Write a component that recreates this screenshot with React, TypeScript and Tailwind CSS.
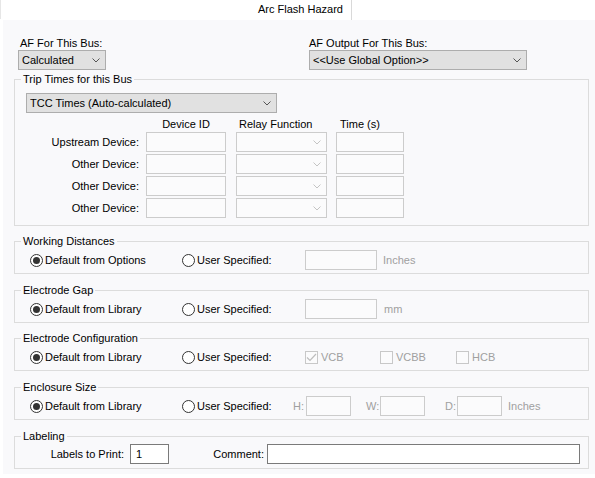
import type { ReactNode } from "react";

function Chevron({ color = "#444" }: { color?: string }) {
  return (
    <svg width="8" height="5" viewBox="0 0 8 5" className="shrink-0">
      <polyline points="0.5,0.5 4,4 7.5,0.5" fill="none" stroke={color} strokeWidth="1" />
    </svg>
  );
}

function Combo({ text, w, disabled }: { text?: string; w: string; disabled?: boolean }) {
  return (
    <div
      className={`flex items-center h-[20px] border pl-[3px] pr-[5px] ${w} ${
        disabled ? "border-[#cccccc] bg-[#fbfbfc]" : "border-[#adadad] bg-[#e1e1e1]"
      }`}
    >
      <span className="flex-1 truncate">{text}</span>
      <Chevron color={disabled ? "#c4c4c4" : "#555"} />
    </div>
  );
}

function TextBox({ w, value, dark }: { w: string; value?: string; dark?: boolean }) {
  return (
    <div
      className={`h-[20px] border pl-[5px] leading-[18px] ${w} ${
        dark ? "border-[#7a7a7a] bg-white" : "border-[#cccccc] bg-[#fbfbfc]"
      }`}
    >
      {value}
    </div>
  );
}

function Radio({ checked, label, w }: { checked?: boolean; label: string; w: string }) {
  return (
    <div className={`flex items-center gap-[2px] ${w}`}>
      <span className="flex items-center justify-center w-[13px] h-[13px] rounded-full border border-[#333] bg-white">
        {checked && <span className="w-[7px] h-[7px] rounded-full bg-[#333]" />}
      </span>
      <span>{label}</span>
    </div>
  );
}

function Check({ checked, label, w }: { checked?: boolean; label: string; w: string }) {
  return (
    <div className={`flex items-center gap-[3px] text-[#a0a0a0] ${w}`}>
      <span className="flex items-center justify-center w-[13px] h-[13px] border border-[#c8c8c8] bg-[#fbfbfc]">
        {checked && (
          <svg width="11" height="9" viewBox="0 0 11 9">
            <polyline points="1,4.5 4,7.5 10,1" fill="none" stroke="#bdbdbd" strokeWidth="1.2" />
          </svg>
        )}
      </span>
      <span>{label}</span>
    </div>
  );
}

function Group({ title, h, mt, children }: { title: string; h: string; mt: string; children: ReactNode }) {
  return (
    <fieldset className={`border border-[#dcdcdc] ${h} ${mt}`}>
      <legend className="ml-[6px] px-[2px] leading-[14px]">{title}</legend>
      {children}
    </fieldset>
  );
}

const rows = ["Upstream Device:", "Other Device:", "Other Device:", "Other Device:"];

export default function App() {
  return (
    <div className="w-[595px] h-[478px] bg-white text-[11px] text-black font-['Liberation_Sans',Arial,sans-serif]">
      <div className="flex h-[20px]">
        <div className="w-[1px] h-[19px] bg-[#e6e6e6]" />
        <div className="ml-[257px] pr-[8px] h-[20px] leading-[19px] border-r border-[#d9d9d9]">Arc Flash Hazard</div>
      </div>

      <div className="ml-[3px] w-[592px] h-[454px] bg-[#f9f9fb] pl-[11px] pr-[6px] pt-[16px]">
        <div className="flex pl-[4px]">
          <div className="w-[291px]">
            <div className="ml-[2px] leading-[14px]">AF For This Bus:</div>
            <Combo text="Calculated" w="w-[88px]" />
          </div>
          <div>
            <div className="leading-[14px]">AF Output For This Bus:</div>
            <Combo text="<<Use Global Option>>" w="w-[218px]" />
          </div>
        </div>

        <Group title="Trip Times for this Bus" h="h-[154px]" mt="mt-[2px]">
          <div className="pl-[11px] pt-[7px]">
            <Combo text="TCC Times (Auto-calculated)" w="w-[251px]" />
            <div className="flex mt-[4px] leading-[14px]">
              <div className="w-[120px]" />
              <div className="w-[80px] text-center">Device ID</div>
              <div className="w-[100px] pl-[13px]">Relay Function</div>
              <div className="w-[68px] text-center">Time (s)</div>
            </div>
            <div className="flex flex-col gap-[2px] mt-[1px]">
              {rows.map((r, i) => (
                <div key={i} className="flex items-center">
                  <div className="w-[113px] pr-[0px] text-right">{r}</div>
                  <div className="ml-[7px]">
                    <TextBox w="w-[80px]" />
                  </div>
                  <div className="ml-[10px]">
                    <Combo w="w-[91px]" disabled />
                  </div>
                  <div className="ml-[9px]">
                    <TextBox w="w-[68px]" />
                  </div>
                </div>
              ))}
            </div>
          </div>
        </Group>

        <Group title="Working Distances" h="h-[40px]" mt="mt-[8px]">
          <div className="flex items-center h-[20px] mt-[2px] pl-[15px]">
            <Radio checked label="Default from Options" w="w-[152px]" />
            <Radio label="User Specified:" w="w-[123px]" />
            <TextBox w="w-[72px]" />
            <span className="ml-[6px] text-[#a0a0a0]">Inches</span>
          </div>
        </Group>

        <Group title="Electrode Gap" h="h-[40px]" mt="mt-[9px]">
          <div className="flex items-center h-[20px] mt-[2px] pl-[15px]">
            <Radio checked label="Default from Library" w="w-[152px]" />
            <Radio label="User Specified:" w="w-[123px]" />
            <TextBox w="w-[72px]" />
            <span className="ml-[7px] text-[#a0a0a0]">mm</span>
          </div>
        </Group>

        <Group title="Electrode Configuration" h="h-[40px]" mt="mt-[8px]">
          <div className="flex items-center h-[20px] mt-[2px] pl-[15px]">
            <Radio checked label="Default from Library" w="w-[152px]" />
            <Radio label="User Specified:" w="w-[123px]" />
            <Check checked label="VCB" w="w-[75px]" />
            <Check label="VCBB" w="w-[76px]" />
            <Check label="HCB" w="w-[60px]" />
          </div>
        </Group>

        <Group title="Enclosure Size" h="h-[40px]" mt="mt-[9px]">
          <div className="flex items-center h-[20px] mt-[2px] pl-[15px]">
            <Radio checked label="Default from Library" w="w-[152px]" />
            <Radio label="User Specified:" w="w-[111px]" />
            <span className="w-[13px] text-[#a0a0a0]">H:</span>
            <TextBox w="w-[45px]" />
            <span className="ml-[15px] w-[14px] text-[#a0a0a0]">W:</span>
            <TextBox w="w-[45px]" />
            <span className="ml-[20px] w-[12px] text-[#a0a0a0]">D:</span>
            <TextBox w="w-[45px]" />
            <span className="ml-[6px] text-[#a0a0a0]">Inches</span>
          </div>
        </Group>

        <Group title="Labeling" h="h-[40px]" mt="mt-[9px]">
          <div className="flex items-center h-[20px] mt-[1px]">
            <div className="w-[109px] text-right">Labels to Print:</div>
            <div className="ml-[6px]">
              <TextBox w="w-[39px]" value="1" dark />
            </div>
            <div className="w-[95px] text-right">Comment:</div>
            <div className="ml-[3px]">
              <TextBox w="w-[313px]" dark />
            </div>
          </div>
        </Group>
      </div>
    </div>
  );
}
